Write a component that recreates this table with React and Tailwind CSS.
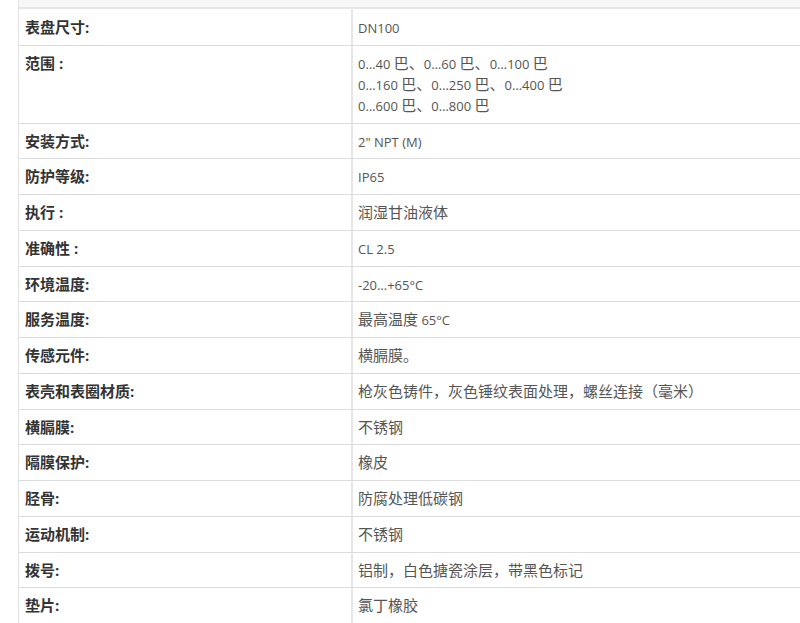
import React from "react";

const rows = [
  { label: "表盘尺寸:", value: ["DN100"] },
  {
    label: "范围 :",
    value: [
      "0…40 巴、0…60 巴、0…100 巴",
      "0…160 巴、0…250 巴、0…400 巴",
      "0…600 巴、0…800 巴",
    ],
  },
  { label: "安装方式:", value: ["2\" NPT (M)"] },
  { label: "防护等级:", value: ["IP65"] },
  { label: "执行 :", value: ["润湿甘油液体"] },
  { label: "准确性 :", value: ["CL 2.5"] },
  { label: "环境温度:", value: ["-20…+65°C"] },
  { label: "服务温度:", value: ["最高温度 65°C"] },
  { label: "传感元件:", value: ["横膈膜。"] },
  { label: "表壳和表圈材质:", value: ["枪灰色铸件，灰色锤纹表面处理，螺丝连接（毫米）"] },
  { label: "横膈膜:", value: ["不锈钢"] },
  { label: "隔膜保护:", value: ["橡皮"] },
  { label: "胫骨:", value: ["防腐处理低碳钢"] },
  { label: "运动机制:", value: ["不锈钢"] },
  { label: "拨号:", value: ["铝制，白色搪瓷涂层，带黑色标记"] },
  { label: "垫片:", value: ["氯丁橡胶"] },
];

// latin bits render smaller than the CJK glyphs in the original page
const Mixed = ({ text }) => {
  const parts = text.split(/([\u3000-\u303f\u4e00-\u9fff\uff00-\uffef]+)/);
  return parts.map((p, i) =>
    /[\u3000-\u303f\u4e00-\u9fff\uff00-\uffef]/.test(p) ? (
      <span key={i}>{p}</span>
    ) : (
      <span key={i} className="text-[13px]">{p}</span>
    )
  );
};

const App = () => {
  return (
    <div
      className="w-[800px] h-[623px] overflow-hidden bg-white pl-[18px]"
      style={{ fontFamily: '"Open Sans", "Noto Sans CJK SC", sans-serif' }}
    >
      <div className="w-[800px] border-l border-[#e2e2e2]">
        <div className="h-[9px] bg-[#f7f7f7] border-b-2 border-[#e6e6e6]" />
        {rows.map((row, i) => (
          <div key={row.label} className="flex border-b border-[#dcdcdc]">
            <div className={(i === 0 ? "pt-[8px] " : "pt-[7px] ") + "w-[332px] shrink-0 pl-[6px] pb-[6.75px] text-[15px] font-bold text-[#333]"}>
              <div className="h-[21px] leading-[21px] whitespace-nowrap">{row.label}</div>
            </div>
            <div className={(i === 0 ? "pt-[8px] " : "pt-[7px] ") + "flex-1 border-l-2 border-[#e6e6e6] pl-[5px] pb-[6.75px] text-[15px] text-[#555]"}>
              {row.value.map((line) => (
                <div key={line} className="h-[21px] leading-[21px] whitespace-nowrap">
                  <Mixed text={line} />
                </div>
              ))}
            </div>
          </div>
        ))}
      </div>
    </div>
  );
};

export default App;
